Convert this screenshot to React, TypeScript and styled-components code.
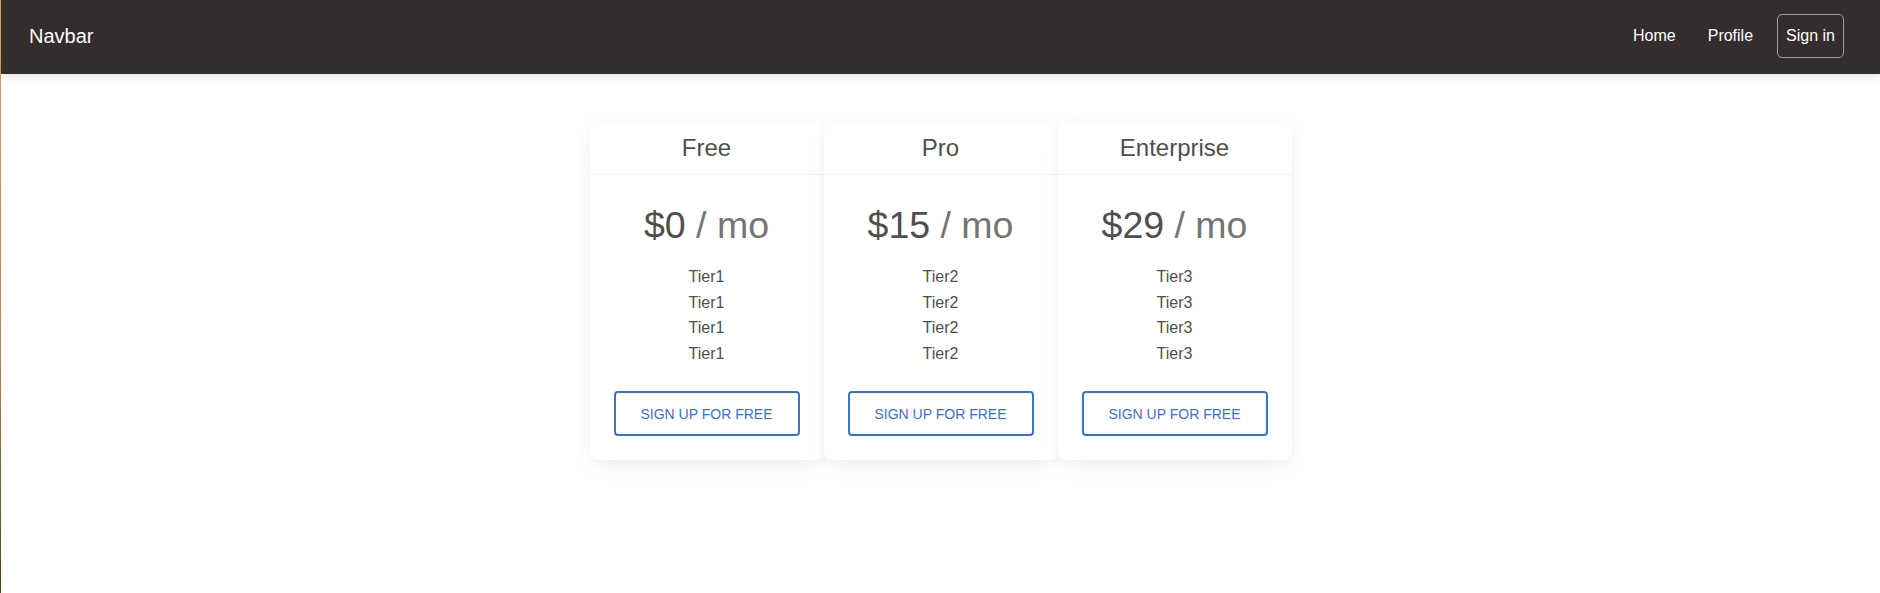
import styled, { createGlobalStyle } from 'styled-components'

const GlobalStyle = createGlobalStyle`
  html, body {
    margin: 0;
    padding: 0;
  }

  body {
    min-height: 100vh;
    background: #fff;
    font-family: 'Liberation Sans', Arial, sans-serif;
    color: #4f4f4f;
    border-left: 1px solid #c9a45c;
    border-image: linear-gradient(#c9a45c, #b08a45 60%, #4f4120) 1;
    box-sizing: border-box;
  }
`

const Nav = styled.nav`
  height: 74px;
  background: #332d2d;
  display: flex;
  align-items: center;
  justify-content: space-between;
  padding: 0 36px 0 28px;
  box-shadow: 0 4px 12px 0 rgb(0 0 0 / 7%), 0 2px 4px rgb(0 0 0 / 5%);
  position: relative;
  z-index: 1;
`

const Brand = styled.a`
  color: #fff;
  font-size: 20px;
  text-decoration: none;
  margin-top: -2px;
`

const NavLinks = styled.div`
  display: flex;
  align-items: center;
`

const NavLink = styled.a`
  color: #fff;
  font-size: 16px;
  text-decoration: none;
  padding: 0 16px;
  margin-top: -3px;
`

const SignInButton = styled.button`
  height: 44px;
  margin: -2px 0 0 8px;
  padding: 0 8px;
  background: transparent;
  color: #fff;
  font-family: inherit;
  font-size: 16px;
  border: 1px solid #9e9e9e;
  border-radius: 5px;
  cursor: pointer;
`

const Main = styled.main`
  display: flex;
  justify-content: center;
  padding-top: 48px;
`

const CardRow = styled.div`
  display: grid;
  grid-template-columns: repeat(3, 234px);
`

const Card = styled.div`
  background: #fff;
  border-radius: 8px;
  box-shadow: 0 2px 15px -3px rgb(0 0 0 / 7%), 0 10px 20px -2px rgb(0 0 0 / 4%);
  display: flex;
  flex-direction: column;
`

const CardHeader = styled.div`
  height: 52px;
  display: flex;
  align-items: center;
  justify-content: center;
  border-bottom: 1px solid #f0f0f0;
  font-size: 24px;
  color: #4f4f4f;
`

const CardBody = styled.div`
  padding: 27px 24px 24px;
  display: flex;
  flex-direction: column;
  align-items: center;
`

const Price = styled.div`
  font-size: 37.5px;
  line-height: 47px;
  color: #4f4f4f;
  margin-bottom: 15px;
`

const Per = styled.span`
  color: #757575;
`

const Features = styled.ul`
  list-style: none;
  margin: 0 0 25px;
  padding: 0;
  text-align: center;
  font-size: 16px;
  line-height: 25.6px;
  color: #4f4f4f;
`

const SignUpButton = styled.button`
  width: 100%;
  height: 45px;
  background: #fff;
  border: 2px solid #3b71ca;
  border-radius: 4px;
  color: #3b71ca;
  font-family: inherit;
  font-size: 14px;
  text-transform: uppercase;
  cursor: pointer;
`

const plans = [
  { name: 'Free', price: 0, tier: 'Tier1' },
  { name: 'Pro', price: 15, tier: 'Tier2' },
  { name: 'Enterprise', price: 29, tier: 'Tier3' },
]

export default function App() {
  return (
    <>
      <GlobalStyle />
      <Nav>
        <Brand href="#">Navbar</Brand>
        <NavLinks>
          <NavLink href="#">Home</NavLink>
          <NavLink href="#">Profile</NavLink>
          <SignInButton>Sign in</SignInButton>
        </NavLinks>
      </Nav>
      <Main>
        <CardRow>
          {plans.map((plan) => (
            <Card key={plan.name}>
              <CardHeader>{plan.name}</CardHeader>
              <CardBody>
                <Price>
                  ${plan.price} <Per>/ mo</Per>
                </Price>
                <Features>
                  {[0, 1, 2, 3].map((i) => (
                    <li key={i}>{plan.tier}</li>
                  ))}
                </Features>
                <SignUpButton>Sign up for free</SignUpButton>
              </CardBody>
            </Card>
          ))}
        </CardRow>
      </Main>
    </>
  )
}
